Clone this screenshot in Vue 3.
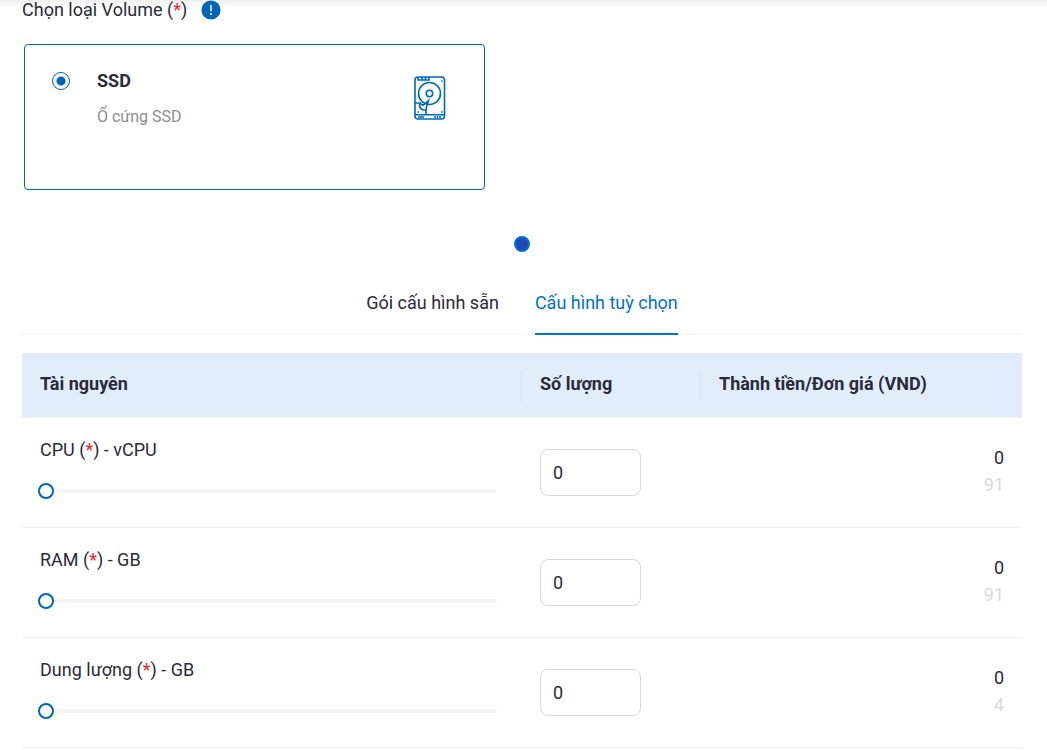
<script setup>
import { ref } from 'vue'

const volume = ref('ssd')
const activeTab = ref('custom')
const tabs = [
  { id: 'preset', label: 'Gói cấu hình sẵn' },
  { id: 'custom', label: 'Cấu hình tuỳ chọn' },
]
const resources = ref([
  { id: 'cpu', name: 'CPU', unit: 'vCPU', amount: 0, price: 91 },
  { id: 'ram', name: 'RAM', unit: 'GB', amount: 0, price: 91 },
  { id: 'disk', name: 'Dung lượng', unit: 'GB', amount: 0, price: 4 },
])
</script>

<template>
  <main class="page">
    <div class="top-shade"></div>
    <h2 class="title">
      <span class="title-text">Chọn loại Volume (<span class="req">*</span>)</span>
      <svg class="info" viewBox="0 0 20 20" aria-hidden="true">
        <circle cx="10" cy="10" r="9.6" fill="#0066b3" />
        <path d="M10 5v6.2" stroke="#fff" stroke-width="1.5" />
        <circle cx="10" cy="14" r="1" fill="#fff" />
      </svg>
    </h2>

    <label class="card">
      <input v-model="volume" class="radio" type="radio" name="volume" value="ssd" />
      <span class="card-text">
        <strong class="card-name">SSD</strong>
        <span class="card-desc">Ổ cứng SSD</span>
      </span>
      <svg class="disk" viewBox="0 0 32 46" fill="none" stroke="#0068b8" stroke-width="1.6" aria-hidden="true">
        <rect x="1" y="2" width="29.500" height="42" rx="3" />
        <path d="M4 2v3h11V2M8 2v3M11.500 2v3M1 39.700h29.500" />
        <circle cx="15.500" cy="18.500" r="11" />
        <circle cx="15.500" cy="18.500" r="3.200" />
        <path d="M1 28h5c-1.500 3.500.5 6.800 4 7h2v4.500" />
        <path d="M6 28.500l3.200 1.800L14.500 25.500L12.300 32.500v2.500" />
        <path d="M4 42h6M21 41v2M23.500 41v2M26 41v2" />
        <path d="M27 6h1.500M27 37h1.500M3.500 37H5" />
      </svg>
    </label>

    <div class="pager">
      <button class="dot" type="button" aria-label="1"></button>
    </div>

    <nav class="tabs" role="tablist">
      <button
        v-for="tab in tabs"
        :key="tab.id"
        type="button"
        role="tab"
        class="tab"
        :class="{ active: tab.id === activeTab }"
        :aria-selected="tab.id === activeTab"
        @click="activeTab = tab.id"
      >{{ tab.label }}</button>
    </nav>

    <table class="grid">
      <colgroup>
        <col class="c-name" />
        <col class="c-amount" />
        <col />
      </colgroup>
      <thead>
        <tr>
          <th scope="col"><div class="head">Tài nguyên</div></th>
          <th scope="col"><div class="head">Số lượng</div></th>
          <th scope="col"><div class="head">Thành tiền/Đơn giá (VND)</div></th>
        </tr>
      </thead>
      <tbody>
        <tr v-for="r in resources" :key="r.id">
          <td>
            <label class="name" :for="r.id + '-range'">{{ r.name }} (<span class="req">*</span>) - {{ r.unit }}</label>
            <input :id="r.id + '-range'" v-model.number="r.amount" class="range" type="range" min="0" max="100" />
          </td>
          <td>
            <input v-model.number="r.amount" class="amount" type="text" :aria-label="r.name" />
          </td>
          <td class="cost">
            <div>{{ r.amount * r.price }}</div>
            <div class="unit-price">{{ r.price }}</div>
          </td>
        </tr>
      </tbody>
    </table>
  </main>
</template>

<style>
body {
  background: #fff;
  overflow: hidden;
}
</style>

<style scoped>
.page {
  position: relative;
  padding: 0 25px 0 22px;
  font-family: Roboto, "Noto Sans", sans-serif;
  font-size: 18px;
  line-height: 27px;
  color: #2a2a3c;
}
.top-shade {
  position: absolute;
  top: 0;
  left: 0;
  right: 0;
  height: 8px;
  background: linear-gradient(#f0f0f0, #fff);
}
.title {
  position: relative;
  display: flex;
  align-items: center;
  gap: 14px;
  margin: 0;
  height: 20px;
  font-size: 18px;
  font-weight: 400;
}
.title-text {
  padding-bottom: 2px;
}
.info {
  width: 20px;
  height: 20px;
}
.req {
  color: #f5222d;
}
.card {
  box-sizing: border-box;
  display: flex;
  align-items: flex-start;
  width: 46.1%;
  min-height: 146px;
  margin: 24px 0 0 2px;
  padding: 22px 38px 22px 27px;
  border: 1px solid #0066b3;
  border-radius: 4px;
}
.radio {
  appearance: none;
  box-sizing: border-box;
  width: 18px;
  height: 18px;
  margin: 5px 27px 0 0;
  border: 1px solid #0066b3;
  border-radius: 50%;
}
.radio:checked {
  background: radial-gradient(circle, #0066b3 4px, #fff 5px);
}
.card-text {
  display: flex;
  flex: 1;
  flex-direction: column;
  gap: 9px;
}
.card-name {
  font-weight: 700;
}
.card-desc {
  font-size: 16px;
  color: #8c8c8c;
}
.disk {
  width: 32px;
  height: 46px;
  margin-top: 8px;
}
.pager {
  display: flex;
  justify-content: center;
  margin-top: 46px;
}
.dot {
  width: 16px;
  height: 16px;
  padding: 0;
  border: 2px solid #0072ce;
  border-radius: 50%;
  background: #2348b5;
}
.tabs {
  display: flex;
  justify-content: center;
  gap: 36px;
  margin-top: 20px;
  border-bottom: 1px solid #f0f0f0;
}
.tab {
  height: 63px;
  margin-bottom: -1px;
  padding: 0;
  border: 0;
  border-bottom: 2px solid transparent;
  background: none;
  font: inherit;
  color: inherit;
}
.tab.active {
  color: #0072ce;
  border-bottom-color: #0072ce;
}
.grid {
  width: 100%;
  margin-top: 18px;
  table-layout: fixed;
  border-collapse: separate;
  border-spacing: 0;
}
.c-name {
  width: 50%;
}
.c-amount {
  width: 17.9%;
}
th {
  height: 64px;
  padding: 0;
  background: #e1edfb;
  border-bottom: 1px solid #f0f0f0;
  font-weight: 700;
  text-align: left;
}
.head {
  padding: 0 18px 4px;
  border-right: 1px solid #d7e2f0;
}
th:last-child .head {
  border-right-color: transparent;
}
td {
  box-sizing: border-box;
  height: 110px;
  padding: 0 18px;
  border-bottom: 1px solid #f0f0f0;
}
.name {
  display: block;
}
.range {
  appearance: none;
  display: block;
  width: calc(100% - 5px);
  height: 16px;
  margin: 20px 0 11px -2px;
  background: none;
}
.range::-webkit-slider-runnable-track {
  height: 4px;
  border-radius: 2px;
  background: #f5f5f5;
}
.range::-webkit-slider-thumb {
  appearance: none;
  box-sizing: border-box;
  width: 16px;
  height: 16px;
  margin-top: -6px;
  border: 2px solid #0066b3;
  border-radius: 50%;
  background: #fff;
}
.amount {
  box-sizing: border-box;
  display: block;
  width: 101px;
  height: 47px;
  padding: 0 12px;
  border: 1px solid #d5dade;
  border-radius: 8px;
  font: inherit;
  color: inherit;
}
.cost {
  padding-bottom: 3px;
  text-align: right;
}
.unit-price {
  color: #d9d9d9;
}
</style>
